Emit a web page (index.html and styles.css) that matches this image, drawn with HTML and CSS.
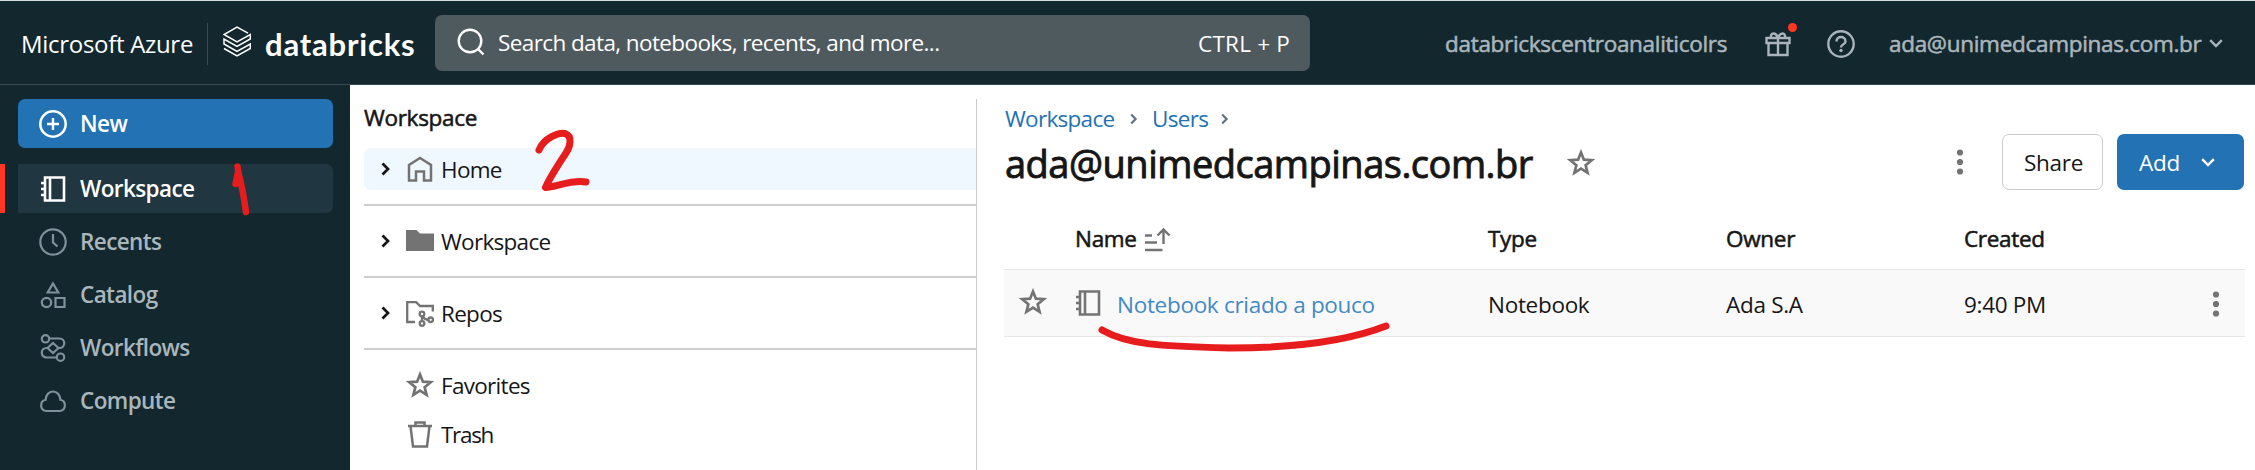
FILE: index.html
```html
<!DOCTYPE html>
<html lang="en">
<head>
<meta charset="utf-8">
<title>Databricks Workspace</title>
<link rel="stylesheet" href="styles.css">
</head>
<body>
<svg class="defs" width="0" height="0" aria-hidden="true">
  <symbol id="star" viewBox="0 0 26 26"><path d="M13 3.2l2.7 6.7 7.2.5-5.6 4.6 1.8 7.2-6.1-3.9-6.1 3.9 1.8-7.2-5.6-4.6 7.2-.5z" fill="none" stroke="currentColor" stroke-width="2.5"/></symbol>
  <symbol id="notebook" viewBox="0 0 26 26"><path d="M5 1.5h19v23H5zM10 1.5v23M1 7h5M1 13h5M1 19h5" fill="none" stroke="currentColor" stroke-width="2.6"/></symbol>
  <symbol id="caret" viewBox="0 0 10 14"><path d="M1.5 1.5L7 7l-5.500 5.500" fill="none" stroke="currentColor" stroke-width="2.7"/></symbol>
  <symbol id="down" viewBox="0 0 14 9"><path d="M1.200 1.200L7 7l5.800-5.800" fill="none" stroke="currentColor" stroke-width="2.400"/></symbol>
  <symbol id="dots" viewBox="0 0 8 26"><g fill="currentColor"><circle cx="4" cy="3.500" r="3.100"/><circle cx="4" cy="13" r="3.100"/><circle cx="4" cy="22.500" r="3.100"/></g></symbol>
</svg>
<header class="topbar">
  <span class="brand">Microsoft Azure</span>
  <span class="rule"></span>
  <svg class="logo" width="28" height="31" viewBox="0 0 28 31"><path d="M25 7.200L14 1 1 8.500 14 16 27.300 8.500V13L14 20.500 1 13v5L14 25.500 27.300 18V22.500L14 29.800 1 22.500" fill="none" stroke="#fff" stroke-width="1.500"/></svg>
  <span class="wordmark">databricks</span>
  <div class="search">
    <svg width="28" height="28" viewBox="0 0 28 28"><g fill="none" stroke="#fff" stroke-width="2.400"><circle cx="13" cy="13" r="11.300"/><path d="M20.500 20.500L26.500 26.500"/></g></svg>
    <span class="hint">Search data, notebooks, recents, and more...</span>
    <span class="keys">CTRL + P</span>
  </div>
  <span class="tenant">databrickscentroanaliticolrs</span>
  <span class="gift"><svg width="26" height="26" viewBox="0 0 26 26"><path d="M1.500 7h23v5h-23zM3.500 12v12h19V12M13 7v17M13 7C11 1 5 1 6 7M13 7c2-6 8-6 7 0" fill="none" stroke="currentColor" stroke-width="2.400"/></svg><i class="badge"></i></span>
  <svg class="help" width="28" height="28" viewBox="0 0 28 28"><g fill="none" stroke="currentColor" stroke-width="2.400"><circle cx="14" cy="14" r="12.700"/><path d="M9.500 11.500c0-6 9-6 9 0 0 3-4.500 2.500-4.500 6"/></g><circle cx="14" cy="20.500" r="1.700" fill="currentColor"/></svg>
  <span class="account">ada@unimedcampinas.com.br</span>
  <svg class="adown" width="14" height="9"><use href="#down"/></svg>
</header>
<div class="body">
  <nav class="sidebar">
    <a class="item new"><svg width="28" height="28" viewBox="0 0 28 28"><path d="M14 8v12M8 14h12" stroke="currentColor" stroke-width="2.400"/><circle cx="14" cy="14" r="12.700" fill="none" stroke="currentColor" stroke-width="2.500"/></svg><span>New</span></a>
    <a class="item active"><svg width="28" height="26"><use href="#notebook"/></svg><span>Workspace</span></a>
    <a class="item"><svg width="28" height="28" viewBox="0 0 28 28"><g fill="none" stroke="currentColor" stroke-width="2.200"><circle cx="14" cy="14" r="12.700"/><path d="M14 6v8.500l4.500 4"/></g></svg><span>Recents</span></a>
    <a class="item"><svg width="28" height="28" viewBox="0 0 28 28"><g fill="none" stroke="currentColor" stroke-width="2.200"><path d="M14 2.500l5.300 9H8.700zM16.500 17h9v9h-9z"/><circle cx="7.500" cy="21.500" r="4.700"/></g></svg><span>Catalog</span></a>
    <a class="item"><svg width="28" height="28" viewBox="0 0 28 28"><g fill="none" stroke="currentColor" stroke-width="2.200"><circle cx="6.500" cy="4.800" r="3.700"/><circle cx="21.500" cy="23.200" r="3.700"/><path d="M10 4.500h10.500a4.700 4.700 0 0 1 0 9.500h-1.500M18 23.500H7.500a4.700 4.700 0 0 1 0-9.500H9M14 9l5.500 5-5.500 5-5.500-5z"/></g></svg><span>Workflows</span></a>
    <a class="item"><svg width="28" height="28" viewBox="0 0 28 28"><path d="M7 24a5.700 5.700 0 0 1-.4-11.200C7 8 10 4.500 14 4.500s7 3.500 7.400 8.300A5.700 5.700 0 0 1 21 24z" fill="none" stroke="currentColor" stroke-width="2.200"/></svg><span>Compute</span></a>
  </nav>
  <aside class="tree">
    <h2>Workspace</h2>
    <div class="row sel"><svg class="car" width="10" height="14"><use href="#caret"/></svg><svg class="ic" width="28" height="28" viewBox="0 0 28 28"><path d="M3 10L14 3l11 7v15.500h-7v-9h-8v9H3z" fill="none" stroke="currentColor" stroke-width="2.500"/></svg><span>Home</span></div>
    <hr>
    <div class="row"><svg class="car" width="10" height="14"><use href="#caret"/></svg><svg class="ic" width="28" height="28" viewBox="0 0 28 28"><path d="M0 3h10.500l3.500 3.500h14V24H0z" fill="currentColor"/></svg><span>Workspace</span></div>
    <hr>
    <div class="row"><svg class="car" width="10" height="14"><use href="#caret"/></svg><svg class="ic" width="28" height="28" viewBox="0 0 28 28"><g fill="none" stroke="currentColor" stroke-width="2.300"><path d="M9 23H1.200V3.200h9L14 7h12.800v5.500"/><circle cx="16" cy="15" r="2.300"/><circle cx="16" cy="24.500" r="2.300"/><circle cx="24.700" cy="20.800" r="2.300"/><path d="M16 17.300v5M17 17.500c1.500 3 3 3.300 5.500 3.300"/></g></svg><span>Repos</span></div>
    <hr>
    <div class="row"><svg class="ic lone" width="28" height="28"><use href="#star"/></svg><span>Favorites</span></div>
    <div class="row trash"><svg class="ic lone" width="28" height="28" viewBox="0 0 28 28"><path d="M2 6h24M4.500 6L7 26.500h14L23.500 6M9.500 6V2.500h9V6" fill="none" stroke="currentColor" stroke-width="2.500"/></svg><span>Trash</span></div>
  </aside>
  <main class="main">
    <div class="crumbs"><a class="c1">Workspace</a><svg width="8" height="12" viewBox="0 0 10 14"><use href="#caret"/></svg><a class="c2">Users</a><svg width="8" height="12" viewBox="0 0 10 14"><use href="#caret"/></svg></div>
    <div class="heading">
      <h1>ada@unimedcampinas.com.br</h1>
      <svg class="hstar" width="28" height="28"><use href="#star"/></svg>
      <svg class="hdots" width="8" height="26"><use href="#dots"/></svg>
      <button class="share"><span>Share</span></button>
      <button class="add"><span>Add</span><svg width="14" height="9"><use href="#down"/></svg></button>
    </div>
    <div class="grid head">
      <span></span><span class="name"><b class="h-name">Name</b><svg width="26" height="25" viewBox="0 0 26 25"><path d="M0 8.500h7M0 15.500h12M0 23h17.500M18.500 17V2.500M12.500 8.500l6-6 6 6" fill="none" stroke="currentColor" stroke-width="2.400"/></svg></span><b>Type</b><b>Owner</b><b>Created</b><span></span>
    </div>
    <div class="grid line">
      <svg class="rstar" width="28" height="28"><use href="#star"/></svg><span class="name"><svg width="26" height="26"><use href="#notebook"/></svg><a class="nb">Notebook criado a pouco</a></span><span class="cell">Notebook</span><span class="cell">Ada S.A</span><span class="cell">9:40 PM</span><svg class="rdots" width="8" height="26"><use href="#dots"/></svg>
    </div>
  </main>
</div>
<svg class="ink" width="2255" height="470" viewBox="0 0 2255 470" fill="none" stroke="#e71c1d" stroke-linecap="round" stroke-linejoin="round">
  <path stroke-width="6.500" d="M237.500 166.500L239 175Q243 190 246 212M238 172L235.500 184"/>
  <path stroke-width="7" d="M539 150C544 138 559 132 565 133.500C573 136 570 147 566 153C558 165 550 177 545.500 187.500C556 187 573 179 586 182"/>
  <path stroke-width="7" d="M1102 330C1128 345 1160 346 1229 348C1290 348 1345 342 1386 326"/>
</svg>
</body>
</html>
```

FILE: styles.css
```css
* { box-sizing: border-box; }
body { margin: 0; width: 2255px; height: 470px; overflow: hidden; background: #fff; color: #161616; font: 22.5px/30px "Open Sans", "Noto Sans", sans-serif; letter-spacing: -0.3px; white-space: nowrap; }
.defs, .ink { position: absolute; left: 0; top: 0; }
.ink { pointer-events: none; }
svg { display: block; flex: none; }
h1, h2 { margin: 0; font-weight: 400; }
b { font-weight: 400; }
b, h2, .tenant, .account { -webkit-text-stroke: 0.55px currentColor; }

.topbar { display: flex; align-items: center; height: 85px; padding: 2px 0 0 21px; border-top: 1px solid #d5dcdd; border-bottom: 1px solid #3a484f; background: #13272e; color: #a9b5bb; }
.topbar > * { flex: none; }
.brand { width: 186px; color: #fff; font-size: 24px; }
.rule { width: 1px; height: 42px; background: #3b4a51; }
.logo { margin: 0 14px 4px 15px; }
.wordmark { width: 170px; color: #fff; font: 700 31px/40px Lato, sans-serif; letter-spacing: 0.8px; }
.search { display: flex; align-items: center; width: 875px; height: 56px; padding: 0 20px 0 22px; margin-bottom: 1px; border-radius: 7px; background: #4f5a5f; color: #fff; }
.search svg { margin-bottom: 3px; }
.hint { flex: 1; margin-left: 13px; padding-bottom: 1px; letter-spacing: -0.6px; }
.keys { padding-top: 1px; letter-spacing: 0.2px; }
.tenant { width: 320px; margin-left: 135px; }
.gift { position: relative; width: 26px; }
.badge { position: absolute; left: 23px; top: -8px; width: 9px; height: 9px; border-radius: 50%; background: #ff3621; }
.help { margin-left: 36px; }
.account { width: 320px; margin-left: 34px; }

.body { display: flex; height: 385px; }
.sidebar { display: flex; flex-direction: column; gap: 4px; flex: none; width: 350px; padding-top: 14px; background: #13272e; color: #7f929b; }
.item { display: flex; align-items: center; gap: 13px; height: 49px; margin: 0 17px 0 18px; padding-left: 21px; border-radius: 7px; font-weight: 600; letter-spacing: -0.6px; }
.item span { padding-top: 1px; color: #a9b6bb; }
.item.new { margin-bottom: 12px; background: #2272b4; color: #fff; }
.item.active { margin-left: 0; padding-left: 34px; border-left: 5px solid #ff3621; border-radius: 0 7px 7px 0; background: linear-gradient(90deg, #13272e 13px, #203640 13px); color: #fff; }
.item.new span, .item.active span { color: #fff; }

.tree { flex: none; width: 627px; margin-top: 14px; padding-left: 14px; border-right: 1px solid #ccc; }
.tree h2 { height: 49px; padding-top: 4px; font-size: 22.5px; }
.row { display: flex; align-items: center; height: 42px; padding-left: 17px; border-radius: 7px 0 0 7px; letter-spacing: -0.7px; }
.row span { padding-top: 2px; }
.row.sel { background: #eff7ff; }
.row.trash { margin-top: 7px; }
.row.trash span { letter-spacing: -1.3px; }
.ic { margin: 0 7px 0 15px; color: #737373; }
.ic.lone { margin-left: 25px; }
hr { height: 2px; margin: 14px 0; border: 0; background: #cecece; }

.main { flex: 1; padding: 19px 11px 0 28px; }
.crumbs { display: flex; align-items: center; color: #5f7281; letter-spacing: -0.7px; }
.crumbs a { color: #2272b4; }
.c1 { width: 125px; }
.c2 { width: 69px; margin-left: 14px; }
.heading { display: flex; align-items: center; height: 56px; }
h1 { width: 562px; padding-top: 1px; font-size: 38px; line-height: 50px; letter-spacing: -0.5px; -webkit-text-stroke: 0.9px currentColor; }
.hstar, .hdots, .rstar, .rdots, .name svg { color: #737373; }
.hstar { margin-top: 2px; }
.hdots { margin-left: auto; }
button { display: flex; align-items: center; height: 56px; border-radius: 7px; font: inherit; letter-spacing: inherit; color: inherit; }
button span { padding-top: 2px; }
.share { width: 101px; margin-left: 38px; padding: 0 0 0 21px; border: 1px solid #ccc; background: #fff; }
.add { width: 127px; margin-left: 14px; padding: 0 29px 0 22px; justify-content: space-between; border: 0; background: #2272b4; color: #fff; }
.grid { display: grid; grid-template-columns: 71px 413px 238px 238px 1fr 33px; align-items: center; margin-left: -1px; margin-right: -1px; }
.head { height: 80px; padding-top: 19px; border-bottom: 1px solid #e6e6e6; }
.line { height: 67px; border-bottom: 1px solid #e6e6e6; background: #f9f9f9; }
.name { display: flex; align-items: center; }
.h-name { width: 70px; }
.rstar { margin-left: 15px; margin-bottom: 2px; }
.nb { margin-left: 16px; padding-top: 3px; color: #4389c4; }
.cell { padding-top: 3px; }
.rdots { margin-top: 2px; }
```
